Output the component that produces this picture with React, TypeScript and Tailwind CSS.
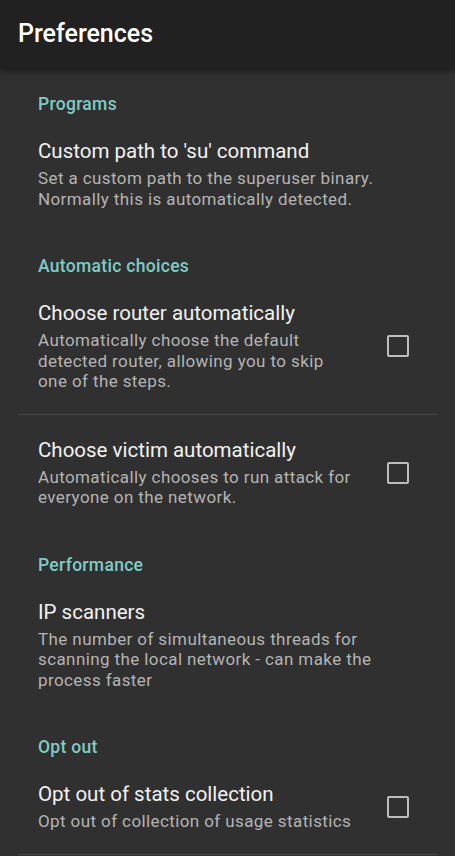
import React from 'react';

type Item = {
  title: string;
  summary: string;
  checkbox?: boolean;
  divider?: boolean;
};

type Section = {
  name: string;
  items: Item[];
};

const sections: Section[] = [
  {
    name: 'Programs',
    items: [
      {
        title: "Custom path to 'su' command",
        summary: 'Set a custom path to the superuser binary. Normally this is automatically detected.',
      },
    ],
  },
  {
    name: 'Automatic choices',
    items: [
      {
        title: 'Choose router automatically',
        summary: 'Automatically choose the default detected router, allowing you to skip one of the steps.',
        checkbox: true,
        divider: true,
      },
      {
        title: 'Choose victim automatically',
        summary: 'Automatically chooses to run attack for everyone on the network.',
        checkbox: true,
      },
    ],
  },
  {
    name: 'Performance',
    items: [
      {
        title: 'IP scanners',
        summary: 'The number of simultaneous threads for scanning the local network - can make the process faster',
      },
    ],
  },
  {
    name: 'Opt out',
    items: [
      {
        title: 'Opt out of stats collection',
        summary: 'Opt out of collection of usage statistics',
        checkbox: true,
        divider: true,
      },
    ],
  },
];

function PrefRow({ item }: { item: Item }) {
  return (
    <>
      <div className="flex items-center pt-[23px] pb-[22px] pl-[38px] pr-[46px]">
        <div className="flex-1 min-w-0">
          <div className="text-[20.5px] leading-[24px] text-[#f2f2f2]">{item.title}</div>
          <div className="mt-[5px] text-[17px] leading-[20.5px] tracking-[0.4px] text-[#b4b4b4]">
            {item.summary}
          </div>
        </div>
        {item.checkbox && (
          <div className="ml-[34px] w-[22px] h-[22px] shrink-0 rounded-[2px] border-2 border-[#bdbdbd]" />
        )}
      </div>
      {item.divider && <div className="mx-[18px] h-px bg-[#474747]" />}
    </>
  );
}

export default function App() {
  return (
    <div
      className="w-[455px] h-[856px] overflow-hidden bg-[#303030]"
      style={{ fontFamily: 'Roboto, "Noto Sans", sans-serif' }}
    >
      <div className="h-[70px] bg-[#212121] pl-[18px] pt-[19px] shadow-[0_2px_4px_rgba(0,0,0,0.3)] relative">
        <h1 className="text-[25px] leading-[30px] font-medium text-white">Preferences</h1>
      </div>

      <div>
        {sections.map((s, i) => (
          <div key={s.name}>
            <div
              className={`${i === 0 ? 'pt-[22px]' : 'pt-[23px]'} pl-[38px] text-[17.5px] leading-[24px] tracking-[0.3px] font-medium text-[#80cbc4]`}
            >
              {s.name}
            </div>
            {s.items.map((item) => (
              <PrefRow key={item.title} item={item} />
            ))}
          </div>
        ))}
      </div>
    </div>
  );
}
